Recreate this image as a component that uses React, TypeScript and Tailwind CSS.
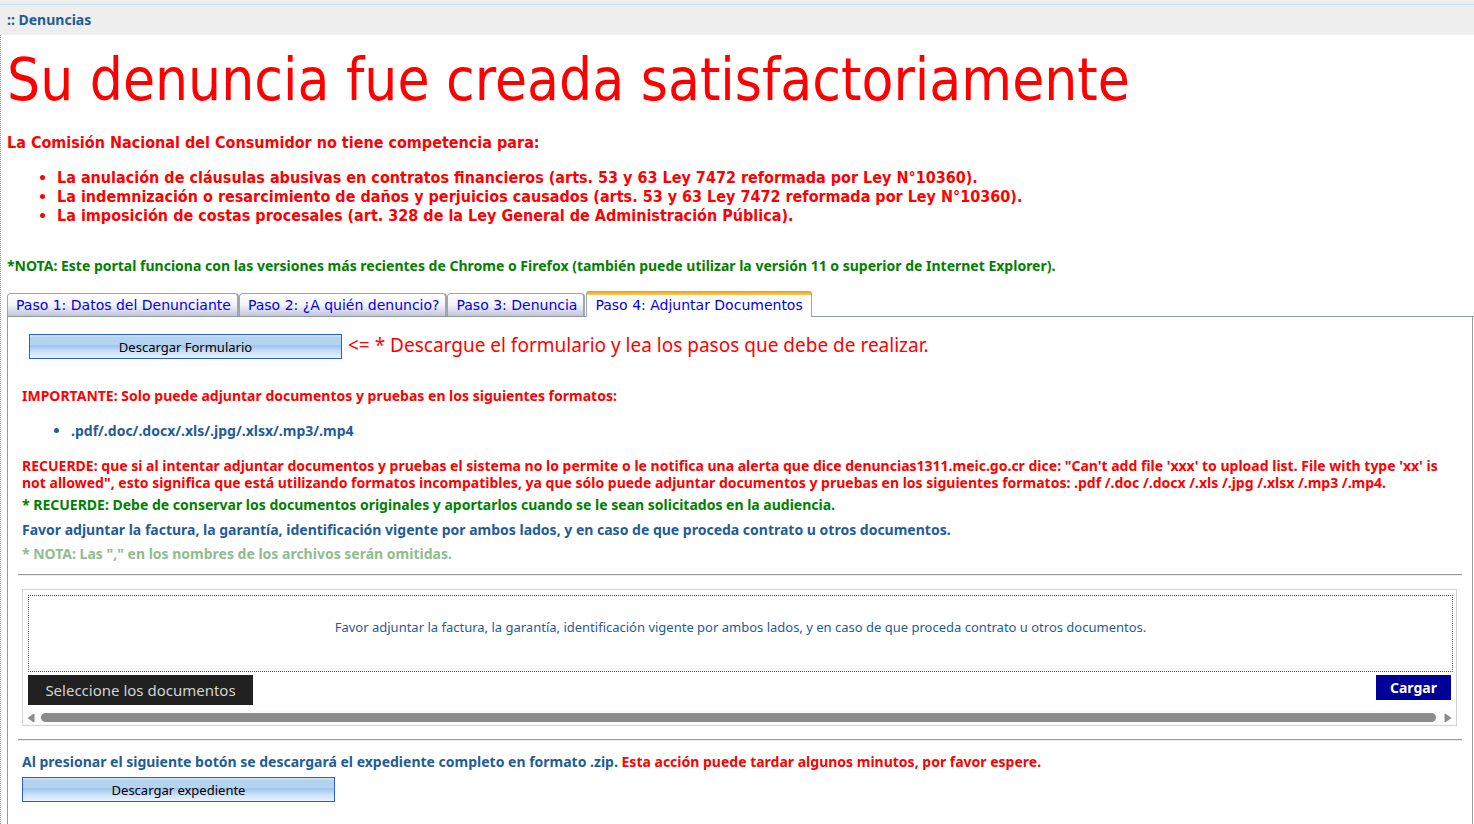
import React from "react";

const steps = [
  "Paso 1: Datos del Denunciante",
  "Paso 2: ¿A quién denuncio?",
  "Paso 3: Denuncia",
  "Paso 4: Adjuntar Documentos",
];

const limits = [
  "La anulación de cláusulas abusivas en contratos financieros (arts. 53 y 63 Ley 7472 reformada por Ley N°10360).",
  "La indemnización o resarcimiento de daños y perjuicios causados (arts. 53 y 63 Ley 7472 reformada por Ley N°10360).",
  "La imposición de costas procesales (art. 328 de la Ley General de Administración Pública).",
];

function BlueButton({ children }: { children: React.ReactNode }) {
  return (
    <button
      type="button"
      className="h-[25px] w-[313px] shrink-0 border border-[#2a5fc4] bg-[linear-gradient(#d3e4f7_0%,#b4d3f0_12%,#b4d3ee_42%,#9cc3ec_46%,#c5dcf7_68%,#e9f3ff_100%)] text-[13px] leading-5 text-black"
    >
      {children}
    </button>
  );
}

function Tab({ label, active }: { label: string; active: boolean }) {
  return (
    <button
      type="button"
      role="tab"
      aria-selected={active}
      className={
        active
          ? "-mb-px ml-px h-[26px] rounded-t-[3px] border-x border-x-[#9aa8ab] bg-[linear-gradient(#e8962e_0px,#f9b42e_2px,#fbcb55_4px,#fff_4px)] px-2 pt-[2px] text-sm leading-5 text-[#0000ee]"
          : "h-[23px] rounded-t-[4px] border border-r-2 border-b-0 border-[#9aa8ae] bg-linear-to-b from-white via-[#f3f3fb] to-[#c3c3dc] pr-[6px] pl-2 text-sm leading-5 text-[#0000ee]"
      }
    >
      {label}
    </button>
  );
}

export default function App() {
  return (
    <div className="min-h-screen bg-white font-['Noto_Sans',sans-serif] text-sm text-[#1f5c99]">
      <header className="h-[35px] bg-[#eee] pt-1">
        <div className="border-t border-[#c9dcea] px-[7px] pt-[5px] font-bold leading-5">:: Denuncias</div>
      </header>

      <main className="flex min-h-[789px] flex-col border-l border-dotted border-[#999] pl-[6px]">
        <div className="font-['DejaVu_Sans_Condensed','DejaVu_Sans',sans-serif] text-[red]">
          <h1 className="pt-2 text-[58px] leading-[75px]">Su denuncia fue creada satisfactoriamente</h1>
          <p className="mt-[15px] text-base font-bold leading-[19px]">
            La Comisión Nacional del Consumidor no tiene competencia para:
          </p>
          <ul className="mt-4 list-disc pl-[50px] text-base font-bold leading-[19px]">
            {limits.map((item) => (
              <li key={item}>{item}</li>
            ))}
          </ul>
        </div>
        <p className="mt-8 font-bold leading-[17px] text-[green]">
          *NOTA: Este portal funciona con las versiones más recientes de Chrome o Firefox (también puede utilizar la
          versión 11 o superior de Internet Explorer).
        </p>

        <div
          role="tablist"
          className="mt-[17px] flex items-end border-b border-[#8c9a9a] font-['DejaVu_Sans',sans-serif]"
        >
          {steps.map((label, i) => (
            <Tab key={label} label={label} active={i === 3} />
          ))}
        </div>

        <section role="tabpanel" className="mr-px flex-1 border-x border-[#999] pt-[17px]">
          <div className="flex items-start gap-[6px] pl-[21px]">
            <BlueButton>Descargar Formulario</BlueButton>
            <span className="text-[19px] leading-[22px] text-[red]">
              &lt;= * Descargue el formulario y lea los pasos que debe de realizar.
            </span>
          </div>

          <div className="px-[14px] font-bold leading-[17px]">
            <p className="mt-7 text-[red]">
              IMPORTANTE: Solo puede adjuntar documentos y pruebas en los siguientes formatos:
            </p>
            <ul className="my-[18px] list-disc pl-[49px]">
              <li>.pdf/.doc/.docx/.xls/.jpg/.xlsx/.mp3/.mp4</li>
            </ul>
            <p className="text-[red]">
              RECUERDE: que si al intentar adjuntar documentos y pruebas el sistema no lo permite o le notifica una
              alerta que dice denuncias1311.meic.go.cr dice: "Can't add file 'xxx' to upload list. File with type 'xx'
              is not allowed", esto significa que está utilizando formatos incompatibles, ya que sólo puede adjuntar
              documentos y pruebas en los siguientes formatos: .pdf /.doc /.docx /.xls /.jpg /.xlsx /.mp3 /.mp4.
            </p>
            <p className="mt-[5px] text-[green]">
              * RECUERDE: Debe de conservar los documentos originales y aportarlos cuando se le sean solicitados en la
              audiencia.
            </p>
            <p className="mt-2">
              Favor adjuntar la factura, la garantía, identificación vigente por ambos lados, y en caso de que proceda
              contrato u otros documentos.
            </p>
            <p className="mt-[7px] text-[#8fbc8f]">* NOTA: Las "," en los nombres de los archivos serán omitidas.</p>
          </div>

          <hr className="mx-[10px] mt-3 h-[2px] border-t border-b border-t-[#999] border-b-[#eee]" />

          <div className="mt-[13px] mr-[15px] ml-[14px] border border-[#d3d3d3]">
            <div className="mt-[5px] mr-[3px] ml-[5px] flex h-[77px] items-start justify-center border border-dotted border-[#1f5c99] pt-[21px] text-[13px] leading-5">
              Favor adjuntar la factura, la garantía, identificación vigente por ambos lados, y en caso de que proceda
              contrato u otros documentos.
            </div>
            <div className="mt-[3px] flex items-start justify-between px-[5px]">
              <button type="button" className="h-[30px] w-[225px] bg-[#212121] text-[15px] leading-5 text-[#d3d3d3]">
                Seleccione los documentos
              </button>
              <button type="button" className="h-[25px] w-[75px] bg-[#000099] font-bold leading-5 text-white">
                Cargar
              </button>
            </div>
            <div className="mt-[5px] flex h-[15px] items-center gap-[6px] bg-[#fcfcfc] px-1">
              <svg width="8" height="10" viewBox="0 0 8 10" className="shrink-0" aria-hidden="true">
                <path d="M0.5 5 6.5.8Q7.5.4 7.5 1.4V8.6Q7.5 9.6 6.5 9.2Z" fill="#8b8b8b" />
              </svg>
              <div className="h-[9px] flex-1 rounded-full bg-[#8b8b8b]" />
              <svg width="8" height="10" viewBox="0 0 8 10" className="ml-[2px] shrink-0" aria-hidden="true">
                <path d="M7.5 5 1.5.8Q.5.4.5 1.4V8.6Q.5 9.6 1.5 9.2Z" fill="#8b8b8b" />
              </svg>
            </div>
          </div>

          <hr className="mx-[10px] mt-[13px] h-[2px] border-t border-b border-t-[#999] border-b-[#eee]" />

          <div className="px-[14px] pt-3">
            <p className="mb-[7px] font-bold leading-[17px]">
              Al presionar el siguiente botón se descargará el expediente completo en formato .zip.{" "}
              <span className="text-[red]">Esta acción puede tardar algunos minutos, por favor espere.</span>
            </p>
            <BlueButton>Descargar expediente</BlueButton>
          </div>
        </section>
      </main>
    </div>
  );
}
